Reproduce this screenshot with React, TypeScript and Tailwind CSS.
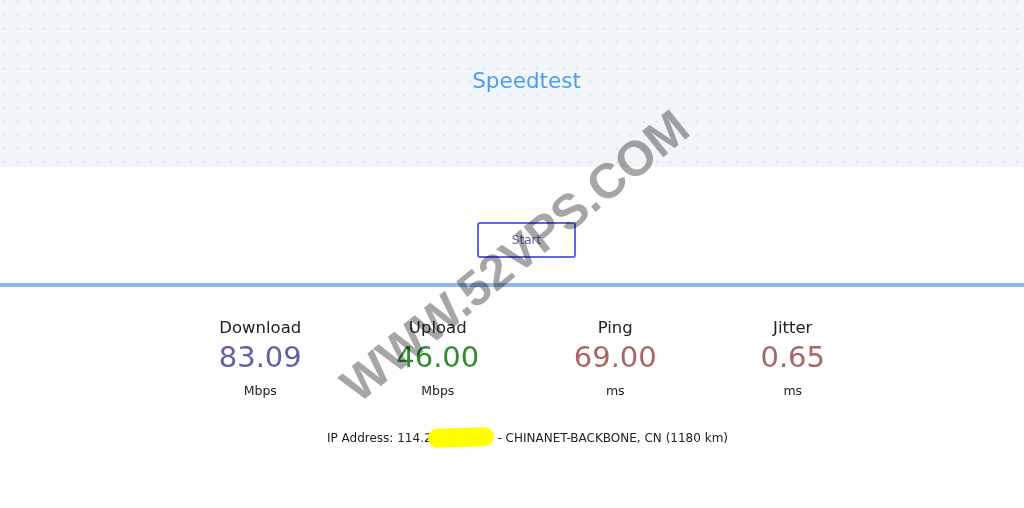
const stats = [
  { label: "Download", value: "83.09", unit: "Mbps", color: "text-[#6161a8]" },
  { label: "Upload", value: "46.00", unit: "Mbps", color: "text-[#2e8b2e]" },
  { label: "Ping", value: "69.00", unit: "ms", color: "text-[#aa6464]" },
  { label: "Jitter", value: "0.65", unit: "ms", color: "text-[#aa6464]" },
];

export default function App() {
  return (
    <div className="relative h-[508px] w-full overflow-hidden bg-white font-['DejaVu_Sans',sans-serif] text-[#222]">
      {/* Header with dotted background */}
      <div className="flex h-[167px] items-center justify-center bg-[#f2f6fa] bg-[radial-gradient(circle,#dde3e9_1px,transparent_1.3px)] bg-[length:13.333px_13.333px] bg-[position:-2.5px_-4.5px] pl-[29px]">
        <h1 className="mt-[-5px] text-[21.5px] font-normal text-[#4a9df0]">Speedtest</h1>
      </div>

      {/* Start button */}
      <div className="flex justify-center pl-[29px] pt-[55px]">
        <button className="h-[36px] w-[99px] rounded-[3px] border-2 border-[#6262ee] text-[12px] text-[#5c5ea8]">
          Start
        </button>
      </div>

      {/* Progress line */}
      <div className="mt-[25px] h-[4px] w-full bg-[#8cb8f8]" />

      {/* Results */}
      <div className="flex justify-center pl-[29px] pt-[31px]">
        {stats.map((s) => (
          <div key={s.label} className="flex w-[177.5px] flex-col items-center">
            <div className="text-[16.5px] leading-[20px]">{s.label}</div>
            <div className={`mt-[1px] text-[29px] leading-[36px] ${s.color}`}>{s.value}</div>
            <div className="mt-[8px] text-[12.5px] leading-[16px]">{s.unit}</div>
          </div>
        ))}
      </div>

      <div className="flex justify-center pl-[31px] pt-[31px] text-[12px] leading-[16px]">
        <span>IP Address: 114.2</span>
        <span className="relative inline-block w-[62px]">
          <span className="text-[#888]">.1.1.1</span>
          <span className="absolute left-[-4px] top-[-2px] h-[19px] w-[66px] rotate-[-2deg] rounded-full bg-[#ffff00]" />
        </span>
        <span>&nbsp;- CHINANET-BACKBONE, CN (1180 km)</span>
      </div>

      {/* Watermark */}
      <div className="pointer-events-none absolute left-[515px] top-[256px] -translate-x-1/2 -translate-y-1/2 rotate-[-39deg] whitespace-nowrap font-['Liberation_Sans',sans-serif] text-[49px] font-bold leading-none text-[#a6a6a6] mix-blend-multiply">
        WWW.52VPS.COM
      </div>
    </div>
  );
}
